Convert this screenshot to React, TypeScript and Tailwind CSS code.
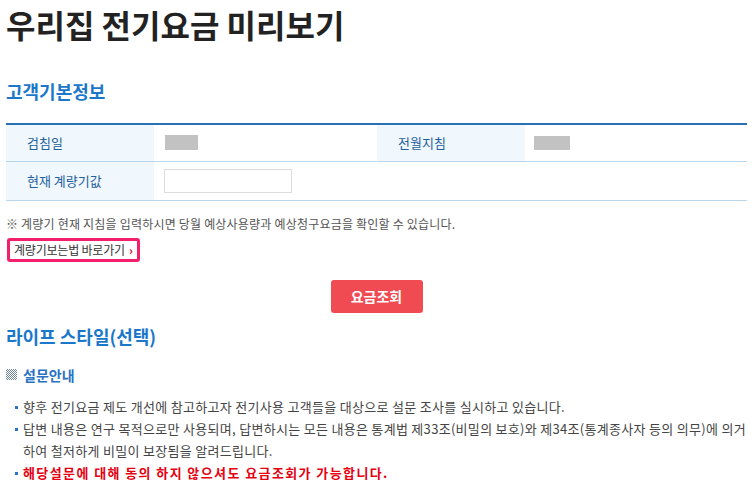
const ko = { fontFamily: '"Noto Sans CJK KR", "Noto Sans", sans-serif' };

function Bullet({ children, red }: { children: React.ReactNode; red?: boolean }) {
    return (
        <li className="flex items-start">
            <span className="mt-[10px] mr-[5px] h-[3px] w-[3px] shrink-0 bg-[#2a72c4]" />
            <span className={red ? 'font-bold tracking-[1.4px] text-[#e60012]' : 'text-[#444]'}>{children}</span>
        </li>
    );
}

export default function App() {
    return (
        <div className="w-[753px] bg-white pl-[6px] pr-[6px] pt-[2px]" style={ko}>
            {/* Page title */}
            <h1 className="text-[32px] font-bold leading-[44px] tracking-[0px] text-[#222]">
                우리집 전기요금 미리보기
            </h1>

            {/* Customer info */}
            <h2 className="mt-[33px] text-[18px] font-bold leading-[24px] text-[#1b77c9]">고객기본정보</h2>

            <table className="mt-[20px] w-[741px] border-collapse border-t-2 border-[#2a70b5] text-[13px]">
                <tbody>
                    <tr className="h-[37px] border-b border-[#bad6ec]">
                        <th className="w-[148px] bg-[#f0f7fd] pl-[21px] text-left font-normal text-[#1e5f9c]">검침일</th>
                        <td className="w-[223px] pl-[11px]">
                            <div className="h-[15px] w-[33px] bg-[#c2c2c2]" />
                        </td>
                        <th className="w-[148px] bg-[#f0f7fd] pl-[21px] text-left font-normal text-[#1e5f9c]">전월지침</th>
                        <td className="pl-[9px]">
                            <div className="h-[14px] w-[36px] bg-[#c2c2c2]" />
                        </td>
                    </tr>
                    <tr className="h-[39px] border-b border-[#bad6ec]">
                        <th className="bg-[#f0f7fd] pl-[21px] text-left font-normal text-[#1e5f9c]">현재 계량기값</th>
                        <td colSpan={3} className="pl-[10px]">
                            <input className="block h-[24px] w-[128px] border border-[#dcdcdc] outline-none" />
                        </td>
                    </tr>
                </tbody>
            </table>

            <p className="mt-[14px] text-[12px] leading-[18px] tracking-[0.2px] text-[#555]">
                ※ 계량기 현재 지침을 입력하시면 당월 예상사용량과 예상청구요금을 확인할 수 있습니다.
            </p>

            <a className="mt-[5px] ml-[1px] inline-flex h-[24px] items-center rounded-[3px] border-[3px] border-[#f21f6b] pl-[4px] pr-[4px] text-[12px] tracking-[-0.2px] text-[#333]">
                계량기보는법 바로가기
                <span className="ml-[4px] font-bold text-[#e60012]">›</span>
            </a>

            <div className="mt-[18px] flex justify-center">
                <button className="h-[33px] w-[92px] rounded-[3px] bg-[#f04a52] text-[14px] font-bold text-white">
                    요금조회
                </button>
            </div>

            {/* Life style */}
            <h2 className="mt-[11px] text-[18px] font-bold leading-[24px] text-[#1b77c9]">라이프 스타일(선택)</h2>

            <h3 className="mt-[17px] flex items-center text-[14px] font-bold leading-[20px] text-[#2a72c4]">
                <span className="mr-[6px] inline-block h-[11px] w-[11px] bg-[repeating-conic-gradient(#6f8399_0_25%,#fff_0_50%)] bg-[length:2px_2px]" />
                설문안내
            </h3>

            <ul className="mt-[11px] pl-[9px] text-[13px] leading-[22px] tracking-[0.3px]">
                <Bullet>향후 전기요금 제도 개선에 참고하고자 전기사용 고객들을 대상으로 설문 조사를 실시하고 있습니다.</Bullet>
                <Bullet>
                    답변 내용은 연구 목적으로만 사용되며, 답변하시는 모든 내용은 통계법 제33조(비밀의 보호)와 제34조(통계종사자 등의 의무)에 의거하여 철저하게 비밀이 보장됨을 알려드립니다.
                </Bullet>
                <Bullet red>해당설문에 대해 동의 하지 않으셔도 요금조회가 가능합니다.</Bullet>
            </ul>
        </div>
    );
}
